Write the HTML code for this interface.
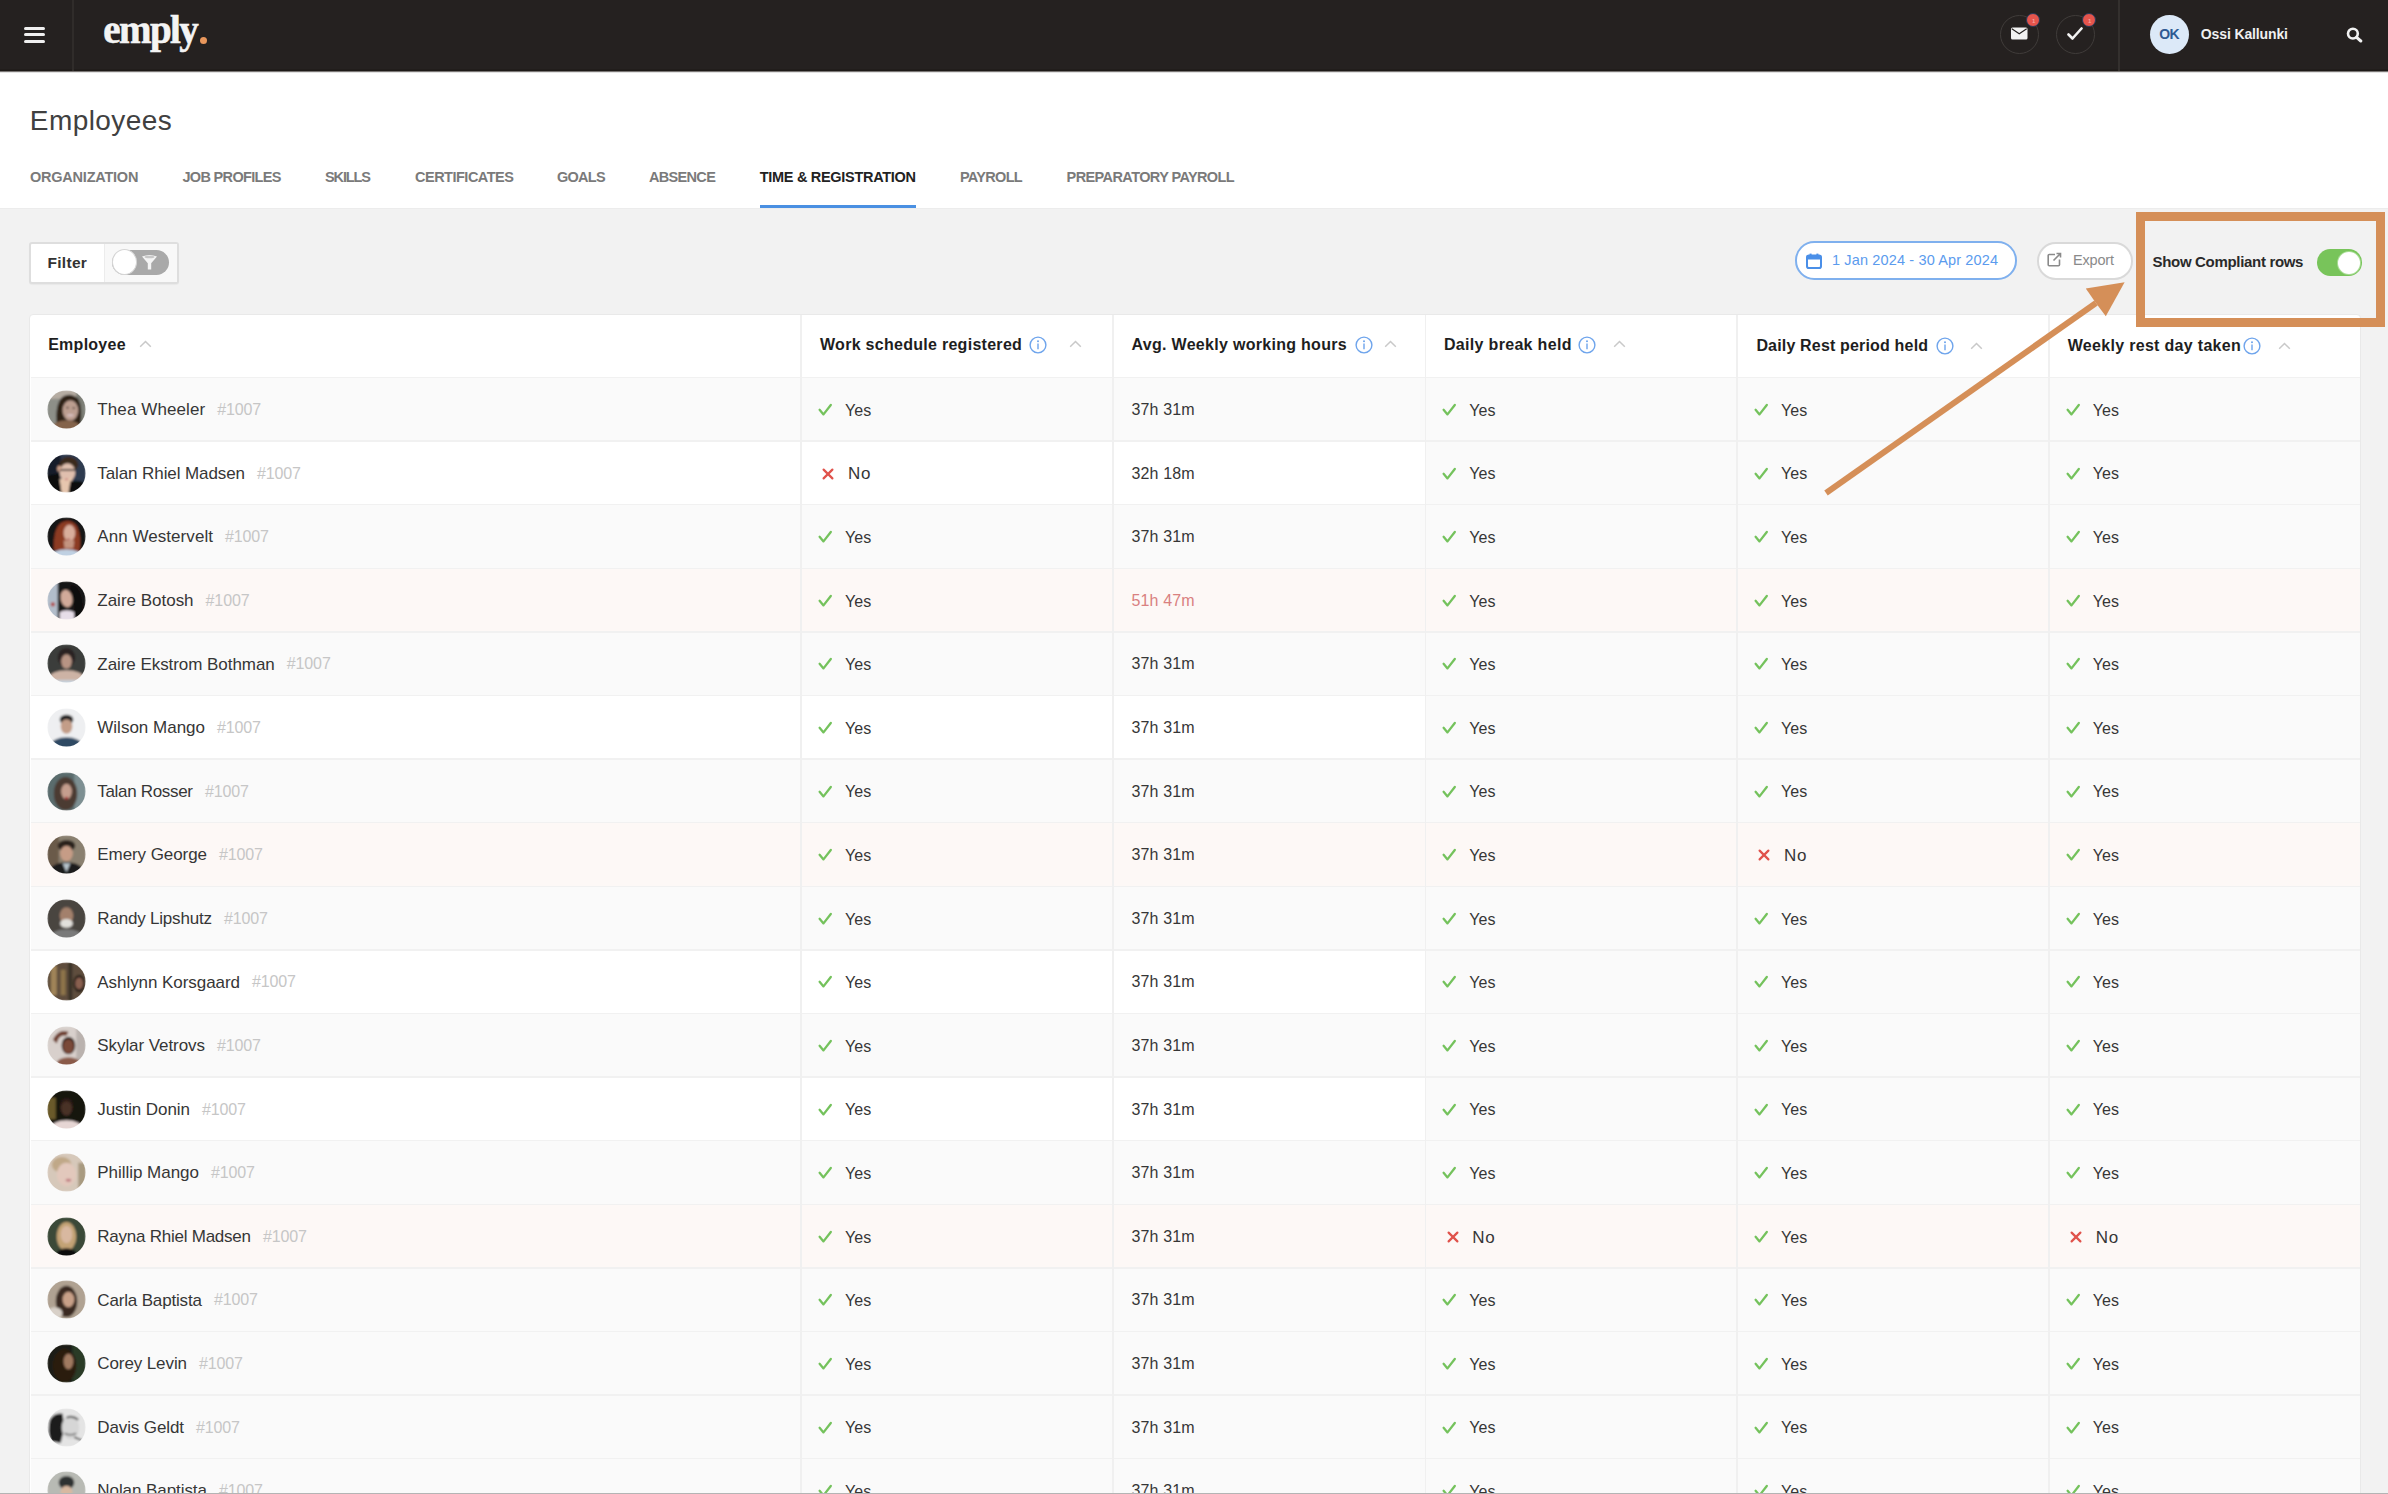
<!DOCTYPE html><html><head><meta charset="utf-8"><style>
*{box-sizing:border-box;margin:0;padding:0}
html,body{width:2388px;height:1494px;overflow:hidden;background:#f2f2f2;font-family:"Liberation Sans", sans-serif;}
.t{position:absolute;white-space:nowrap;line-height:1;}
.a{position:absolute;}
</style></head><body>
<svg width="0" height="0" style="position:absolute"><defs><filter id="bl" x="-10%" y="-10%" width="120%" height="120%"><feGaussianBlur stdDeviation="1.2"/></filter></defs></svg>
<div class="a" style="left:0;top:0;width:2388px;height:71px;background:#252120"></div>
<div class="a" style="left:0;top:69px;width:2388px;height:1px;background:#211d1b"></div><div class="a" style="left:0;top:70px;width:2388px;height:1px;background:#1e1a18"></div>
<div class="a" style="left:24px;top:26.5px;width:21px;height:3px;border-radius:1.5px;background:#f0f0f0"></div>
<div class="a" style="left:24px;top:33px;width:21px;height:3px;border-radius:1.5px;background:#f0f0f0"></div>
<div class="a" style="left:24px;top:39.5px;width:21px;height:3px;border-radius:1.5px;background:#f0f0f0"></div>
<div class="a" style="left:72px;top:0;width:2px;height:71px;background:#302c2a"></div>
<div class="t" style="left:103.30px;top:10.24px;font-size:39px;color:#f4f4f4;font-weight:700;letter-spacing:-1.575px;font-family:'Liberation Serif', serif;-webkit-text-stroke:0.6px #f4f4f4;">emply</div>
<div class="a" style="left:200px;top:37px;width:7px;height:7px;border-radius:50%;background:#e9975c"></div>
<div class="a" style="left:1999.5px;top:14.5px;width:39px;height:39px;border-radius:50%;border:1.5px solid #403c3a"></div>
<div class="a" style="left:2055.5px;top:14.5px;width:39px;height:39px;border-radius:50%;border:1.5px solid #403c3a"></div>
<svg class="a" style="left:2011px;top:27px" width="17" height="13" viewBox="0 0 17 13"><rect x="0" y="0.5" width="16.5" height="12" rx="1.5" fill="#f2f2f2"/><path d="M0.8 1.8 L8.25 6.8 L15.7 1.8" fill="none" stroke="#252120" stroke-width="1.1"/></svg>
<svg class="a" style="left:2067px;top:27px" width="16" height="14" viewBox="0 0 16 14"><path d="M1.5 7.5 L5.5 11.5 L14.5 1.5" fill="none" stroke="#f2f2f2" stroke-width="2.6" stroke-linecap="round" stroke-linejoin="round"/></svg>
<div class="a" style="left:2025.7px;top:13px;width:14px;height:14px;border-radius:50%;background:#e5544c;border:1.5px solid #243a5c"></div>
<div class="t" style="left:2031.90px;top:17.52px;font-size:6px;color:#f3a29c;font-weight:700;letter-spacing:0.000px;">1</div>
<div class="a" style="left:2081.9px;top:13px;width:14px;height:14px;border-radius:50%;background:#e5544c;border:1.5px solid #243a5c"></div>
<div class="t" style="left:2088.10px;top:17.52px;font-size:6px;color:#f3a29c;font-weight:700;letter-spacing:0.000px;">1</div>
<div class="a" style="left:2118px;top:0;width:2px;height:71px;background:#34302e"></div>
<div class="a" style="left:2150px;top:14.5px;width:39px;height:39px;border-radius:50%;background:#dce9f8"></div>
<div class="t" style="left:2159.20px;top:26.95px;font-size:14px;color:#2e5a93;font-weight:700;letter-spacing:-0.700px;">OK</div>
<div class="t" style="left:2200.80px;top:26.95px;font-size:14px;color:#f0f0f0;font-weight:700;letter-spacing:-0.125px;">Ossi Kallunki</div>
<svg class="a" style="left:2346px;top:27px" width="17" height="16" viewBox="0 0 17 16"><circle cx="6.9" cy="6.6" r="4.9" fill="none" stroke="#f2f2f2" stroke-width="2.6"/><path d="M10.6 10.4 L14.8 14" stroke="#f2f2f2" stroke-width="3" stroke-linecap="round"/></svg>
<div class="a" style="left:0;top:71px;width:2388px;height:137.5px;background:#fff"></div><div class="a" style="left:0;top:71px;width:2388px;height:1px;background:#7a7674"></div><div class="a" style="left:0;top:72px;width:2388px;height:1px;background:#e2e2e2"></div>
<div class="a" style="left:0;top:207.5px;width:2388px;height:1.5px;background:#ececec"></div>
<div class="t" style="left:29.80px;top:107.10px;font-size:28px;color:#404040;font-weight:400;letter-spacing:0.438px;">Employees</div>
<div class="t" style="left:30.00px;top:170.03px;font-size:14.5px;color:#7a7a7a;font-weight:700;letter-spacing:-0.227px;">ORGANIZATION</div>
<div class="t" style="left:182.40px;top:170.03px;font-size:14.5px;color:#7a7a7a;font-weight:700;letter-spacing:-0.664px;">JOB PROFILES</div>
<div class="t" style="left:325.00px;top:170.03px;font-size:14.5px;color:#7a7a7a;font-weight:700;letter-spacing:-1.120px;">SKILLS</div>
<div class="t" style="left:415.00px;top:170.03px;font-size:14.5px;color:#7a7a7a;font-weight:700;letter-spacing:-0.500px;">CERTIFICATES</div>
<div class="t" style="left:557.00px;top:170.03px;font-size:14.5px;color:#7a7a7a;font-weight:700;letter-spacing:-0.750px;">GOALS</div>
<div class="t" style="left:649.00px;top:170.03px;font-size:14.5px;color:#7a7a7a;font-weight:700;letter-spacing:-0.683px;">ABSENCE</div>
<div class="t" style="left:759.80px;top:170.03px;font-size:14.5px;color:#222222;font-weight:700;letter-spacing:-0.306px;">TIME &amp; REGISTRATION</div>
<div class="t" style="left:959.90px;top:170.03px;font-size:14.5px;color:#7a7a7a;font-weight:700;letter-spacing:-0.683px;">PAYROLL</div>
<div class="t" style="left:1066.60px;top:170.03px;font-size:14.5px;color:#7a7a7a;font-weight:700;letter-spacing:-0.600px;">PREPARATORY PAYROLL</div>
<div class="a" style="left:760px;top:205px;width:156px;height:3px;background:#4a90e2"></div>
<div class="a" style="left:28.5px;top:241.5px;width:150px;height:42px;border:2px solid #dedede;border-radius:3px;background:#fff;box-shadow:0 1px 1px rgba(0,0,0,0.04)"></div>
<div class="a" style="left:103.5px;top:243.5px;width:73px;height:38px;background:#f8f8f8;border-left:1px solid #ececec"></div>
<div class="t" style="left:47.40px;top:255.28px;font-size:15.5px;color:#333;font-weight:700;letter-spacing:0.320px;">Filter</div>
<div class="a" style="left:112px;top:249.5px;width:57px;height:25px;border-radius:12.5px;background:#a9a9a9"></div>
<div class="a" style="left:111.5px;top:249px;width:25px;height:26px;border-radius:50%;background:#fff;border:1.5px solid #d6d6d6"></div>
<svg class="a" style="left:141px;top:254px" width="17" height="17" viewBox="0 0 17 17"><path d="M1 2.5 Q8.5 -0.5 16 2.5 L10.2 9.2 L10.2 15.5 L6.8 15.5 L6.8 9.2 Z" fill="#f4f4f4"/><ellipse cx="8.5" cy="3" rx="5" ry="1.3" fill="#c8c8c8"/></svg>
<div class="a" style="left:1795px;top:241px;width:222px;height:38.5px;border-radius:19.25px;border:2px solid #7fb0ee;background:#fff"></div>
<svg class="a" style="left:1806px;top:252.5px" width="16" height="16" viewBox="0 0 16 16"><rect x="1" y="2.5" width="14" height="12.5" rx="1.8" fill="none" stroke="#4a8fe8" stroke-width="2"/><rect x="1" y="2.5" width="14" height="4" fill="#4a8fe8"/><rect x="3.6" y="0.6" width="2" height="3" fill="#4a8fe8"/><rect x="10.4" y="0.6" width="2" height="3" fill="#4a8fe8"/></svg>
<div class="t" style="left:1832.00px;top:253.13px;font-size:14.5px;color:#5b9bee;font-weight:400;letter-spacing:0.139px;">1 Jan 2024 - 30 Apr 2024</div>
<div class="a" style="left:2037px;top:242px;width:96px;height:37.5px;border-radius:18.75px;border:2px solid #d9d9d9;background:#fff"></div>
<svg class="a" style="left:2047px;top:252px" width="15" height="15" viewBox="0 0 15 15"><path d="M8 2.5 H2.2 Q1.2 2.5 1.2 3.5 V12.8 Q1.2 13.8 2.2 13.8 H11.5 Q12.5 13.8 12.5 12.8 V7.5" fill="none" stroke="#8a8a8a" stroke-width="1.6"/><path d="M6.5 8.5 L13 2 M9.5 1.5 H13.5 V5.5" fill="none" stroke="#8a8a8a" stroke-width="1.6"/></svg>
<div class="t" style="left:2073.00px;top:253.13px;font-size:14.5px;color:#8a8a8a;font-weight:400;letter-spacing:-0.180px;">Export</div>
<div class="t" style="left:2152.50px;top:253.50px;font-size:15px;color:#2a2a2a;font-weight:700;letter-spacing:-0.317px;">Show Compliant rows</div>
<div class="a" style="left:2317px;top:249px;width:45px;height:26.5px;border-radius:13.25px;background:#78c45a"></div>
<div class="a" style="left:2337.5px;top:251.5px;width:22px;height:22px;border-radius:50%;background:#fff;box-shadow:0 0 0 1px #a8dc95"></div>
<div class="a" style="left:29px;top:313.5px;width:2332px;height:1300px;background:#fff;border:1.5px solid #e9e9e9;border-radius:4px"></div>
<div class="a" style="left:30.5px;top:377.50px;width:2329px;height:63.60px;background:#fafafa"></div>
<div class="a" style="left:30.5px;top:441.10px;width:2329px;height:63.60px;background:#ffffff"></div>
<div class="a" style="left:1425.5px;top:441.10px;width:934.00px;height:63.60px;background:#fafafa"></div>
<div class="a" style="left:30.5px;top:504.70px;width:2329px;height:63.60px;background:#fafafa"></div>
<div class="a" style="left:30.5px;top:568.30px;width:2329px;height:63.60px;background:#fdf8f6"></div>
<div class="a" style="left:30.5px;top:631.90px;width:2329px;height:63.60px;background:#fafafa"></div>
<div class="a" style="left:30.5px;top:695.50px;width:2329px;height:63.60px;background:#ffffff"></div>
<div class="a" style="left:1425.5px;top:695.50px;width:934.00px;height:63.60px;background:#fafafa"></div>
<div class="a" style="left:30.5px;top:759.10px;width:2329px;height:63.60px;background:#fafafa"></div>
<div class="a" style="left:30.5px;top:822.70px;width:2329px;height:63.60px;background:#fdf8f6"></div>
<div class="a" style="left:30.5px;top:886.30px;width:2329px;height:63.60px;background:#fafafa"></div>
<div class="a" style="left:30.5px;top:949.90px;width:2329px;height:63.60px;background:#ffffff"></div>
<div class="a" style="left:1425.5px;top:949.90px;width:934.00px;height:63.60px;background:#fafafa"></div>
<div class="a" style="left:30.5px;top:1013.50px;width:2329px;height:63.60px;background:#fafafa"></div>
<div class="a" style="left:30.5px;top:1077.10px;width:2329px;height:63.60px;background:#ffffff"></div>
<div class="a" style="left:1425.5px;top:1077.10px;width:934.00px;height:63.60px;background:#fafafa"></div>
<div class="a" style="left:30.5px;top:1140.70px;width:2329px;height:63.60px;background:#fafafa"></div>
<div class="a" style="left:30.5px;top:1204.30px;width:2329px;height:63.60px;background:#fdf8f6"></div>
<div class="a" style="left:30.5px;top:1267.90px;width:2329px;height:63.60px;background:#fafafa"></div>
<div class="a" style="left:30.5px;top:1331.50px;width:2329px;height:63.60px;background:#fafafa"></div>
<div class="a" style="left:30.5px;top:1395.10px;width:2329px;height:63.60px;background:#fafafa"></div>
<div class="a" style="left:30.5px;top:1458.70px;width:2329px;height:63.60px;background:#fafafa"></div>
<div class="a" style="left:30.5px;top:376.75px;width:2329px;height:1.5px;background:#f1f1f1"></div>
<div class="a" style="left:30.5px;top:440.35px;width:2329px;height:1.5px;background:#f1f1f1"></div>
<div class="a" style="left:30.5px;top:503.95px;width:2329px;height:1.5px;background:#f1f1f1"></div>
<div class="a" style="left:30.5px;top:567.55px;width:2329px;height:1.5px;background:#f1f1f1"></div>
<div class="a" style="left:30.5px;top:631.15px;width:2329px;height:1.5px;background:#f1f1f1"></div>
<div class="a" style="left:30.5px;top:694.75px;width:2329px;height:1.5px;background:#f1f1f1"></div>
<div class="a" style="left:30.5px;top:758.35px;width:2329px;height:1.5px;background:#f1f1f1"></div>
<div class="a" style="left:30.5px;top:821.95px;width:2329px;height:1.5px;background:#f1f1f1"></div>
<div class="a" style="left:30.5px;top:885.55px;width:2329px;height:1.5px;background:#f1f1f1"></div>
<div class="a" style="left:30.5px;top:949.15px;width:2329px;height:1.5px;background:#f1f1f1"></div>
<div class="a" style="left:30.5px;top:1012.75px;width:2329px;height:1.5px;background:#f1f1f1"></div>
<div class="a" style="left:30.5px;top:1076.35px;width:2329px;height:1.5px;background:#f1f1f1"></div>
<div class="a" style="left:30.5px;top:1139.95px;width:2329px;height:1.5px;background:#f1f1f1"></div>
<div class="a" style="left:30.5px;top:1203.55px;width:2329px;height:1.5px;background:#f1f1f1"></div>
<div class="a" style="left:30.5px;top:1267.15px;width:2329px;height:1.5px;background:#f1f1f1"></div>
<div class="a" style="left:30.5px;top:1330.75px;width:2329px;height:1.5px;background:#f1f1f1"></div>
<div class="a" style="left:30.5px;top:1394.35px;width:2329px;height:1.5px;background:#f1f1f1"></div>
<div class="a" style="left:30.5px;top:1457.95px;width:2329px;height:1.5px;background:#f1f1f1"></div>
<div class="a" style="left:30.5px;top:1521.55px;width:2329px;height:1.5px;background:#f1f1f1"></div>
<div class="a" style="left:800.45px;top:315.0px;width:1.5px;height:1300px;background:#f0f0f0"></div>
<div class="a" style="left:1112.25px;top:315.0px;width:1.5px;height:1300px;background:#f0f0f0"></div>
<div class="a" style="left:1424.75px;top:315.0px;width:1.5px;height:1300px;background:#f0f0f0"></div>
<div class="a" style="left:1736.45px;top:315.0px;width:1.5px;height:1300px;background:#f0f0f0"></div>
<div class="a" style="left:2048.25px;top:315.0px;width:1.5px;height:1300px;background:#f0f0f0"></div>
<div class="t" style="left:48.20px;top:336.66px;font-size:16px;color:#1e1e1e;font-weight:700;letter-spacing:0.257px;">Employee</div>
<svg class="a" style="left:139px;top:340.2px" width="13" height="8" viewBox="0 0 13 8"><path d="M1.2 6.8 L6.5 1.5 L11.8 6.8" fill="none" stroke="#c9c9c9" stroke-width="1.5"/></svg>
<div class="t" style="left:820.00px;top:336.66px;font-size:16px;color:#1e1e1e;font-weight:700;letter-spacing:0.283px;">Work schedule registered</div>
<svg class="a" style="left:1028.8px;top:335.7px" width="18" height="18" viewBox="0 0 18 18"><circle cx="9" cy="9" r="7.9" fill="none" stroke="#6ea4ec" stroke-width="1.4"/><circle cx="9" cy="5.2" r="1" fill="#6ea4ec"/><path d="M9 7.6 V13.2" stroke="#6ea4ec" stroke-width="1.4"/></svg>
<svg class="a" style="left:1068.8px;top:340.2px" width="13" height="8" viewBox="0 0 13 8"><path d="M1.2 6.8 L6.5 1.5 L11.8 6.8" fill="none" stroke="#c9c9c9" stroke-width="1.5"/></svg>
<div class="t" style="left:1131.60px;top:336.66px;font-size:16px;color:#1e1e1e;font-weight:700;letter-spacing:0.292px;">Avg. Weekly working hours</div>
<svg class="a" style="left:1355px;top:335.7px" width="18" height="18" viewBox="0 0 18 18"><circle cx="9" cy="9" r="7.9" fill="none" stroke="#6ea4ec" stroke-width="1.4"/><circle cx="9" cy="5.2" r="1" fill="#6ea4ec"/><path d="M9 7.6 V13.2" stroke="#6ea4ec" stroke-width="1.4"/></svg>
<svg class="a" style="left:1384px;top:340.2px" width="13" height="8" viewBox="0 0 13 8"><path d="M1.2 6.8 L6.5 1.5 L11.8 6.8" fill="none" stroke="#c9c9c9" stroke-width="1.5"/></svg>
<div class="t" style="left:1444.00px;top:336.66px;font-size:16px;color:#1e1e1e;font-weight:700;letter-spacing:0.313px;">Daily break held</div>
<svg class="a" style="left:1578px;top:335.7px" width="18" height="18" viewBox="0 0 18 18"><circle cx="9" cy="9" r="7.9" fill="none" stroke="#6ea4ec" stroke-width="1.4"/><circle cx="9" cy="5.2" r="1" fill="#6ea4ec"/><path d="M9 7.6 V13.2" stroke="#6ea4ec" stroke-width="1.4"/></svg>
<svg class="a" style="left:1613px;top:340.2px" width="13" height="8" viewBox="0 0 13 8"><path d="M1.2 6.8 L6.5 1.5 L11.8 6.8" fill="none" stroke="#c9c9c9" stroke-width="1.5"/></svg>
<div class="t" style="left:1756.40px;top:337.96px;font-size:16px;color:#1e1e1e;font-weight:700;letter-spacing:0.171px;">Daily Rest period held</div>
<svg class="a" style="left:1936px;top:337.0px" width="18" height="18" viewBox="0 0 18 18"><circle cx="9" cy="9" r="7.9" fill="none" stroke="#6ea4ec" stroke-width="1.4"/><circle cx="9" cy="5.2" r="1" fill="#6ea4ec"/><path d="M9 7.6 V13.2" stroke="#6ea4ec" stroke-width="1.4"/></svg>
<svg class="a" style="left:1969.5px;top:341.5px" width="13" height="8" viewBox="0 0 13 8"><path d="M1.2 6.8 L6.5 1.5 L11.8 6.8" fill="none" stroke="#c9c9c9" stroke-width="1.5"/></svg>
<div class="t" style="left:2067.70px;top:337.96px;font-size:16px;color:#1e1e1e;font-weight:700;letter-spacing:0.310px;">Weekly rest day taken</div>
<svg class="a" style="left:2243px;top:337.0px" width="18" height="18" viewBox="0 0 18 18"><circle cx="9" cy="9" r="7.9" fill="none" stroke="#6ea4ec" stroke-width="1.4"/><circle cx="9" cy="5.2" r="1" fill="#6ea4ec"/><path d="M9 7.6 V13.2" stroke="#6ea4ec" stroke-width="1.4"/></svg>
<svg class="a" style="left:2277.7px;top:341.5px" width="13" height="8" viewBox="0 0 13 8"><path d="M1.2 6.8 L6.5 1.5 L11.8 6.8" fill="none" stroke="#c9c9c9" stroke-width="1.5"/></svg>
<svg class="a" style="left:47px;top:390.00px" width="39" height="39" viewBox="0 0 40 40"><defs><clipPath id="c0"><circle cx="20" cy="20" r="19.6"/></clipPath></defs><g clip-path="url(#c0)"><g filter="url(#bl)"><rect width="40" height="40" fill="#8d8f88"/><rect x="0" y="0" width="40" height="9" fill="#b5aca2"/><rect x="30" y="0" width="10" height="40" fill="#7e8078"/><path d="M10 36 Q8 14 16 7 Q24 2 32 9 Q37 18 34 38 Z" fill="#2e2219"/><ellipse cx="24" cy="21" rx="8" ry="10.5" fill="#bc9e90"/><ellipse cx="20" cy="38" rx="14" ry="7" fill="#84644c"/><ellipse cx="21" cy="18" rx="1.4" ry="0.9" fill="#4a3a34"/><ellipse cx="27.5" cy="18.5" rx="1.4" ry="0.9" fill="#4a3a34"/><ellipse cx="24" cy="26" rx="3.5" ry="1.3" fill="#d8c0c0"/></g></g></svg>
<div class="t" style="left:97.30px;top:401.21px;font-size:17px;color:#363636;font-weight:400;letter-spacing:0.100px;">Thea Wheeler</div>
<div class="t" style="left:217.20px;top:402.06px;font-size:16px;color:#c6c6c6;font-weight:400;letter-spacing:-0.125px;">#1007</div>
<svg class="a" style="left:817.0px;top:402.0px" width="16" height="15" viewBox="0 0 16 15"><path d="M2.6 7.8 L6.5 12.4 L13.8 3" fill="none" stroke="#74c25c" stroke-width="2.3" stroke-linecap="round" stroke-linejoin="round"/></svg><div class="t" style="left:845.00px;top:402.76px;font-size:16px;color:#363636;font-weight:400;letter-spacing:0.050px;">Yes</div>
<div class="t" style="left:1131.60px;top:402.06px;font-size:16px;color:#363636;font-weight:400;letter-spacing:0.117px;">37h 31m</div>
<svg class="a" style="left:1441.3px;top:402.0px" width="16" height="15" viewBox="0 0 16 15"><path d="M2.6 7.8 L6.5 12.4 L13.8 3" fill="none" stroke="#74c25c" stroke-width="2.3" stroke-linecap="round" stroke-linejoin="round"/></svg><div class="t" style="left:1469.30px;top:402.76px;font-size:16px;color:#363636;font-weight:400;letter-spacing:0.050px;">Yes</div>
<svg class="a" style="left:1753.0px;top:402.0px" width="16" height="15" viewBox="0 0 16 15"><path d="M2.6 7.8 L6.5 12.4 L13.8 3" fill="none" stroke="#74c25c" stroke-width="2.3" stroke-linecap="round" stroke-linejoin="round"/></svg><div class="t" style="left:1781.00px;top:402.76px;font-size:16px;color:#363636;font-weight:400;letter-spacing:0.050px;">Yes</div>
<svg class="a" style="left:2064.8px;top:402.0px" width="16" height="15" viewBox="0 0 16 15"><path d="M2.6 7.8 L6.5 12.4 L13.8 3" fill="none" stroke="#74c25c" stroke-width="2.3" stroke-linecap="round" stroke-linejoin="round"/></svg><div class="t" style="left:2092.80px;top:402.76px;font-size:16px;color:#363636;font-weight:400;letter-spacing:0.050px;">Yes</div>
<svg class="a" style="left:47px;top:453.60px" width="39" height="39" viewBox="0 0 40 40"><defs><clipPath id="c1"><circle cx="20" cy="20" r="19.6"/></clipPath></defs><g clip-path="url(#c1)"><g filter="url(#bl)"><rect width="40" height="40" fill="#2f3a4f"/><rect x="0" y="0" width="14" height="40" fill="#141c2a"/><path d="M12 12 Q14 2 24 3 Q32 4 32 12 L30 16 L14 16 Z" fill="#3a2a1e"/><ellipse cx="21" cy="19" rx="8" ry="9.5" fill="#e0bfae"/><ellipse cx="12.5" cy="15" rx="2" ry="3" fill="#d8a890"/><rect x="13" y="15.5" width="16" height="1.6" fill="#3a3030"/><path d="M12 26 L26 24 L24 40 L14 40 Z" fill="#e6c6ae"/><path d="M24 28 Q34 26 40 30 L40 40 L22 40 Z" fill="#080808"/><path d="M0 22 L12 20 L15 40 L0 40 Z" fill="#0a0a0a"/><ellipse cx="20" cy="26" rx="2" ry="1" fill="#c88080"/></g></g></svg>
<div class="t" style="left:97.30px;top:464.81px;font-size:17px;color:#363636;font-weight:400;letter-spacing:-0.094px;">Talan Rhiel Madsen</div>
<div class="t" style="left:257.00px;top:465.66px;font-size:16px;color:#c6c6c6;font-weight:400;letter-spacing:-0.125px;">#1007</div>
<svg class="a" style="left:821.3000000000001px;top:466.70000000000005px" width="14" height="14" viewBox="0 0 14 14"><path d="M2.6 2.6 L11.4 11.4 M11.4 2.6 L2.6 11.4" stroke="#e0524b" stroke-width="2.2" stroke-linecap="round"/></svg><div class="t" style="left:848.00px;top:465.31px;font-size:17px;color:#363636;font-weight:400;letter-spacing:0.600px;">No</div>
<div class="t" style="left:1131.60px;top:465.66px;font-size:16px;color:#363636;font-weight:400;letter-spacing:0.117px;">32h 18m</div>
<svg class="a" style="left:1441.3px;top:465.6px" width="16" height="15" viewBox="0 0 16 15"><path d="M2.6 7.8 L6.5 12.4 L13.8 3" fill="none" stroke="#74c25c" stroke-width="2.3" stroke-linecap="round" stroke-linejoin="round"/></svg><div class="t" style="left:1469.30px;top:466.36px;font-size:16px;color:#363636;font-weight:400;letter-spacing:0.050px;">Yes</div>
<svg class="a" style="left:1753.0px;top:465.6px" width="16" height="15" viewBox="0 0 16 15"><path d="M2.6 7.8 L6.5 12.4 L13.8 3" fill="none" stroke="#74c25c" stroke-width="2.3" stroke-linecap="round" stroke-linejoin="round"/></svg><div class="t" style="left:1781.00px;top:466.36px;font-size:16px;color:#363636;font-weight:400;letter-spacing:0.050px;">Yes</div>
<svg class="a" style="left:2064.8px;top:465.6px" width="16" height="15" viewBox="0 0 16 15"><path d="M2.6 7.8 L6.5 12.4 L13.8 3" fill="none" stroke="#74c25c" stroke-width="2.3" stroke-linecap="round" stroke-linejoin="round"/></svg><div class="t" style="left:2092.80px;top:466.36px;font-size:16px;color:#363636;font-weight:400;letter-spacing:0.050px;">Yes</div>
<svg class="a" style="left:47px;top:517.20px" width="39" height="39" viewBox="0 0 40 40"><defs><clipPath id="c2"><circle cx="20" cy="20" r="19.6"/></clipPath></defs><g clip-path="url(#c2)"><g filter="url(#bl)"><rect width="40" height="40" fill="#121212"/><path d="M7 34 Q6 10 16 5 Q26 2 31 10 Q36 22 33 36 Z" fill="#8c3a22"/><ellipse cx="23" cy="16.5" rx="6" ry="8.5" fill="#d9ae9c"/><ellipse cx="22" cy="23" rx="1.8" ry="1" fill="#b06060"/><path d="M17 24 L28 24 L27 32 L18 32 Z" fill="#c49480"/><ellipse cx="20" cy="40" rx="16" ry="7" fill="#bfd0e2"/></g></g></svg>
<div class="t" style="left:97.30px;top:528.41px;font-size:17px;color:#363636;font-weight:400;letter-spacing:0.054px;">Ann Westervelt</div>
<div class="t" style="left:225.00px;top:529.26px;font-size:16px;color:#c6c6c6;font-weight:400;letter-spacing:-0.125px;">#1007</div>
<svg class="a" style="left:817.0px;top:529.1999999999999px" width="16" height="15" viewBox="0 0 16 15"><path d="M2.6 7.8 L6.5 12.4 L13.8 3" fill="none" stroke="#74c25c" stroke-width="2.3" stroke-linecap="round" stroke-linejoin="round"/></svg><div class="t" style="left:845.00px;top:529.96px;font-size:16px;color:#363636;font-weight:400;letter-spacing:0.050px;">Yes</div>
<div class="t" style="left:1131.60px;top:529.26px;font-size:16px;color:#363636;font-weight:400;letter-spacing:0.117px;">37h 31m</div>
<svg class="a" style="left:1441.3px;top:529.1999999999999px" width="16" height="15" viewBox="0 0 16 15"><path d="M2.6 7.8 L6.5 12.4 L13.8 3" fill="none" stroke="#74c25c" stroke-width="2.3" stroke-linecap="round" stroke-linejoin="round"/></svg><div class="t" style="left:1469.30px;top:529.96px;font-size:16px;color:#363636;font-weight:400;letter-spacing:0.050px;">Yes</div>
<svg class="a" style="left:1753.0px;top:529.1999999999999px" width="16" height="15" viewBox="0 0 16 15"><path d="M2.6 7.8 L6.5 12.4 L13.8 3" fill="none" stroke="#74c25c" stroke-width="2.3" stroke-linecap="round" stroke-linejoin="round"/></svg><div class="t" style="left:1781.00px;top:529.96px;font-size:16px;color:#363636;font-weight:400;letter-spacing:0.050px;">Yes</div>
<svg class="a" style="left:2064.8px;top:529.1999999999999px" width="16" height="15" viewBox="0 0 16 15"><path d="M2.6 7.8 L6.5 12.4 L13.8 3" fill="none" stroke="#74c25c" stroke-width="2.3" stroke-linecap="round" stroke-linejoin="round"/></svg><div class="t" style="left:2092.80px;top:529.96px;font-size:16px;color:#363636;font-weight:400;letter-spacing:0.050px;">Yes</div>
<svg class="a" style="left:47px;top:580.80px" width="39" height="39" viewBox="0 0 40 40"><defs><clipPath id="c3"><circle cx="20" cy="20" r="19.6"/></clipPath></defs><g clip-path="url(#c3)"><g filter="url(#bl)"><rect width="40" height="40" fill="#161212"/><rect x="0" y="0" width="11" height="40" fill="#b2bdca"/><circle cx="6" cy="24" r="2.2" fill="#b04848"/><ellipse cx="20" cy="18" rx="6" ry="9" fill="#d2aa9a" transform="rotate(-12 20 18)"/><path d="M13 32 Q20 28 28 32 L28 40 L13 40 Z" fill="#e6dde8"/><path d="M26 4 Q38 10 36 36 L28 36 Q30 18 24 6 Z" fill="#0e0a0a"/></g></g></svg>
<div class="t" style="left:97.30px;top:592.01px;font-size:17px;color:#363636;font-weight:400;letter-spacing:-0.009px;">Zaire Botosh</div>
<div class="t" style="left:205.60px;top:592.86px;font-size:16px;color:#c6c6c6;font-weight:400;letter-spacing:-0.125px;">#1007</div>
<svg class="a" style="left:817.0px;top:592.8px" width="16" height="15" viewBox="0 0 16 15"><path d="M2.6 7.8 L6.5 12.4 L13.8 3" fill="none" stroke="#74c25c" stroke-width="2.3" stroke-linecap="round" stroke-linejoin="round"/></svg><div class="t" style="left:845.00px;top:593.56px;font-size:16px;color:#363636;font-weight:400;letter-spacing:0.050px;">Yes</div>
<div class="t" style="left:1131.60px;top:592.86px;font-size:16px;color:#d98080;font-weight:400;letter-spacing:0.117px;">51h 47m</div>
<svg class="a" style="left:1441.3px;top:592.8px" width="16" height="15" viewBox="0 0 16 15"><path d="M2.6 7.8 L6.5 12.4 L13.8 3" fill="none" stroke="#74c25c" stroke-width="2.3" stroke-linecap="round" stroke-linejoin="round"/></svg><div class="t" style="left:1469.30px;top:593.56px;font-size:16px;color:#363636;font-weight:400;letter-spacing:0.050px;">Yes</div>
<svg class="a" style="left:1753.0px;top:592.8px" width="16" height="15" viewBox="0 0 16 15"><path d="M2.6 7.8 L6.5 12.4 L13.8 3" fill="none" stroke="#74c25c" stroke-width="2.3" stroke-linecap="round" stroke-linejoin="round"/></svg><div class="t" style="left:1781.00px;top:593.56px;font-size:16px;color:#363636;font-weight:400;letter-spacing:0.050px;">Yes</div>
<svg class="a" style="left:2064.8px;top:592.8px" width="16" height="15" viewBox="0 0 16 15"><path d="M2.6 7.8 L6.5 12.4 L13.8 3" fill="none" stroke="#74c25c" stroke-width="2.3" stroke-linecap="round" stroke-linejoin="round"/></svg><div class="t" style="left:2092.80px;top:593.56px;font-size:16px;color:#363636;font-weight:400;letter-spacing:0.050px;">Yes</div>
<svg class="a" style="left:47px;top:644.40px" width="39" height="39" viewBox="0 0 40 40"><defs><clipPath id="c4"><circle cx="20" cy="20" r="19.6"/></clipPath></defs><g clip-path="url(#c4)"><g filter="url(#bl)"><rect width="40" height="40" fill="#3b3d3b"/><ellipse cx="20" cy="14" rx="9" ry="10" fill="#2a2220"/><ellipse cx="20" cy="18" rx="5.5" ry="7.5" fill="#b79484"/><ellipse cx="20" cy="34" rx="17" ry="7" fill="#cdb3a5"/><rect x="0" y="37" width="40" height="4" fill="#c8d2dc"/></g></g></svg>
<div class="t" style="left:97.30px;top:655.61px;font-size:17px;color:#363636;font-weight:400;letter-spacing:-0.055px;">Zaire Ekstrom Bothman</div>
<div class="t" style="left:286.80px;top:656.46px;font-size:16px;color:#c6c6c6;font-weight:400;letter-spacing:-0.125px;">#1007</div>
<svg class="a" style="left:817.0px;top:656.4px" width="16" height="15" viewBox="0 0 16 15"><path d="M2.6 7.8 L6.5 12.4 L13.8 3" fill="none" stroke="#74c25c" stroke-width="2.3" stroke-linecap="round" stroke-linejoin="round"/></svg><div class="t" style="left:845.00px;top:657.16px;font-size:16px;color:#363636;font-weight:400;letter-spacing:0.050px;">Yes</div>
<div class="t" style="left:1131.60px;top:656.46px;font-size:16px;color:#363636;font-weight:400;letter-spacing:0.117px;">37h 31m</div>
<svg class="a" style="left:1441.3px;top:656.4px" width="16" height="15" viewBox="0 0 16 15"><path d="M2.6 7.8 L6.5 12.4 L13.8 3" fill="none" stroke="#74c25c" stroke-width="2.3" stroke-linecap="round" stroke-linejoin="round"/></svg><div class="t" style="left:1469.30px;top:657.16px;font-size:16px;color:#363636;font-weight:400;letter-spacing:0.050px;">Yes</div>
<svg class="a" style="left:1753.0px;top:656.4px" width="16" height="15" viewBox="0 0 16 15"><path d="M2.6 7.8 L6.5 12.4 L13.8 3" fill="none" stroke="#74c25c" stroke-width="2.3" stroke-linecap="round" stroke-linejoin="round"/></svg><div class="t" style="left:1781.00px;top:657.16px;font-size:16px;color:#363636;font-weight:400;letter-spacing:0.050px;">Yes</div>
<svg class="a" style="left:2064.8px;top:656.4px" width="16" height="15" viewBox="0 0 16 15"><path d="M2.6 7.8 L6.5 12.4 L13.8 3" fill="none" stroke="#74c25c" stroke-width="2.3" stroke-linecap="round" stroke-linejoin="round"/></svg><div class="t" style="left:2092.80px;top:657.16px;font-size:16px;color:#363636;font-weight:400;letter-spacing:0.050px;">Yes</div>
<svg class="a" style="left:47px;top:708.00px" width="39" height="39" viewBox="0 0 40 40"><defs><clipPath id="c5"><circle cx="20" cy="20" r="19.6"/></clipPath></defs><g clip-path="url(#c5)"><g filter="url(#bl)"><rect width="40" height="40" fill="#eeeff1"/><ellipse cx="20" cy="12" rx="7" ry="5" fill="#222"/><ellipse cx="20" cy="19" rx="6" ry="7.5" fill="#c39d88"/><ellipse cx="20" cy="38" rx="16" ry="8" fill="#2f4a63"/></g></g></svg>
<div class="t" style="left:97.30px;top:719.21px;font-size:17px;color:#363636;font-weight:400;letter-spacing:0.000px;">Wilson Mango</div>
<div class="t" style="left:217.00px;top:720.06px;font-size:16px;color:#c6c6c6;font-weight:400;letter-spacing:-0.125px;">#1007</div>
<svg class="a" style="left:817.0px;top:720.0px" width="16" height="15" viewBox="0 0 16 15"><path d="M2.6 7.8 L6.5 12.4 L13.8 3" fill="none" stroke="#74c25c" stroke-width="2.3" stroke-linecap="round" stroke-linejoin="round"/></svg><div class="t" style="left:845.00px;top:720.76px;font-size:16px;color:#363636;font-weight:400;letter-spacing:0.050px;">Yes</div>
<div class="t" style="left:1131.60px;top:720.06px;font-size:16px;color:#363636;font-weight:400;letter-spacing:0.117px;">37h 31m</div>
<svg class="a" style="left:1441.3px;top:720.0px" width="16" height="15" viewBox="0 0 16 15"><path d="M2.6 7.8 L6.5 12.4 L13.8 3" fill="none" stroke="#74c25c" stroke-width="2.3" stroke-linecap="round" stroke-linejoin="round"/></svg><div class="t" style="left:1469.30px;top:720.76px;font-size:16px;color:#363636;font-weight:400;letter-spacing:0.050px;">Yes</div>
<svg class="a" style="left:1753.0px;top:720.0px" width="16" height="15" viewBox="0 0 16 15"><path d="M2.6 7.8 L6.5 12.4 L13.8 3" fill="none" stroke="#74c25c" stroke-width="2.3" stroke-linecap="round" stroke-linejoin="round"/></svg><div class="t" style="left:1781.00px;top:720.76px;font-size:16px;color:#363636;font-weight:400;letter-spacing:0.050px;">Yes</div>
<svg class="a" style="left:2064.8px;top:720.0px" width="16" height="15" viewBox="0 0 16 15"><path d="M2.6 7.8 L6.5 12.4 L13.8 3" fill="none" stroke="#74c25c" stroke-width="2.3" stroke-linecap="round" stroke-linejoin="round"/></svg><div class="t" style="left:2092.80px;top:720.76px;font-size:16px;color:#363636;font-weight:400;letter-spacing:0.050px;">Yes</div>
<svg class="a" style="left:47px;top:771.60px" width="39" height="39" viewBox="0 0 40 40"><defs><clipPath id="c6"><circle cx="20" cy="20" r="19.6"/></clipPath></defs><g clip-path="url(#c6)"><g filter="url(#bl)"><rect width="40" height="40" fill="#5a6c6d"/><rect x="28" y="0" width="12" height="40" fill="#7d8f92"/><ellipse cx="19" cy="22" rx="12" ry="17" fill="#4b3a30"/><ellipse cx="20" cy="20" rx="5.5" ry="8" fill="#c59e8e"/><circle cx="20" cy="27" r="1.5" fill="#a02828"/></g></g></svg>
<div class="t" style="left:97.30px;top:782.81px;font-size:17px;color:#363636;font-weight:400;letter-spacing:-0.318px;">Talan Rosser</div>
<div class="t" style="left:205.00px;top:783.66px;font-size:16px;color:#c6c6c6;font-weight:400;letter-spacing:-0.125px;">#1007</div>
<svg class="a" style="left:817.0px;top:783.6px" width="16" height="15" viewBox="0 0 16 15"><path d="M2.6 7.8 L6.5 12.4 L13.8 3" fill="none" stroke="#74c25c" stroke-width="2.3" stroke-linecap="round" stroke-linejoin="round"/></svg><div class="t" style="left:845.00px;top:784.36px;font-size:16px;color:#363636;font-weight:400;letter-spacing:0.050px;">Yes</div>
<div class="t" style="left:1131.60px;top:783.66px;font-size:16px;color:#363636;font-weight:400;letter-spacing:0.117px;">37h 31m</div>
<svg class="a" style="left:1441.3px;top:783.6px" width="16" height="15" viewBox="0 0 16 15"><path d="M2.6 7.8 L6.5 12.4 L13.8 3" fill="none" stroke="#74c25c" stroke-width="2.3" stroke-linecap="round" stroke-linejoin="round"/></svg><div class="t" style="left:1469.30px;top:784.36px;font-size:16px;color:#363636;font-weight:400;letter-spacing:0.050px;">Yes</div>
<svg class="a" style="left:1753.0px;top:783.6px" width="16" height="15" viewBox="0 0 16 15"><path d="M2.6 7.8 L6.5 12.4 L13.8 3" fill="none" stroke="#74c25c" stroke-width="2.3" stroke-linecap="round" stroke-linejoin="round"/></svg><div class="t" style="left:1781.00px;top:784.36px;font-size:16px;color:#363636;font-weight:400;letter-spacing:0.050px;">Yes</div>
<svg class="a" style="left:2064.8px;top:783.6px" width="16" height="15" viewBox="0 0 16 15"><path d="M2.6 7.8 L6.5 12.4 L13.8 3" fill="none" stroke="#74c25c" stroke-width="2.3" stroke-linecap="round" stroke-linejoin="round"/></svg><div class="t" style="left:2092.80px;top:784.36px;font-size:16px;color:#363636;font-weight:400;letter-spacing:0.050px;">Yes</div>
<svg class="a" style="left:47px;top:835.20px" width="39" height="39" viewBox="0 0 40 40"><defs><clipPath id="c7"><circle cx="20" cy="20" r="19.6"/></clipPath></defs><g clip-path="url(#c7)"><g filter="url(#bl)"><rect width="40" height="40" fill="#8a8070"/><rect x="0" y="0" width="12" height="40" fill="#6a5a48"/><ellipse cx="20" cy="11" rx="9" ry="6" fill="#2a201a"/><ellipse cx="20" cy="19" rx="6.5" ry="8" fill="#c69c86"/><ellipse cx="20" cy="38" rx="18" ry="10" fill="#1e1e1e"/><path d="M16 29 L20 38 L24 29 Z" fill="#b8c4cc"/></g></g></svg>
<div class="t" style="left:97.30px;top:846.41px;font-size:17px;color:#363636;font-weight:400;letter-spacing:-0.073px;">Emery George</div>
<div class="t" style="left:219.00px;top:847.26px;font-size:16px;color:#c6c6c6;font-weight:400;letter-spacing:-0.125px;">#1007</div>
<svg class="a" style="left:817.0px;top:847.2px" width="16" height="15" viewBox="0 0 16 15"><path d="M2.6 7.8 L6.5 12.4 L13.8 3" fill="none" stroke="#74c25c" stroke-width="2.3" stroke-linecap="round" stroke-linejoin="round"/></svg><div class="t" style="left:845.00px;top:847.96px;font-size:16px;color:#363636;font-weight:400;letter-spacing:0.050px;">Yes</div>
<div class="t" style="left:1131.60px;top:847.26px;font-size:16px;color:#363636;font-weight:400;letter-spacing:0.117px;">37h 31m</div>
<svg class="a" style="left:1441.3px;top:847.2px" width="16" height="15" viewBox="0 0 16 15"><path d="M2.6 7.8 L6.5 12.4 L13.8 3" fill="none" stroke="#74c25c" stroke-width="2.3" stroke-linecap="round" stroke-linejoin="round"/></svg><div class="t" style="left:1469.30px;top:847.96px;font-size:16px;color:#363636;font-weight:400;letter-spacing:0.050px;">Yes</div>
<svg class="a" style="left:1757.3px;top:848.3000000000001px" width="14" height="14" viewBox="0 0 14 14"><path d="M2.6 2.6 L11.4 11.4 M11.4 2.6 L2.6 11.4" stroke="#e0524b" stroke-width="2.2" stroke-linecap="round"/></svg><div class="t" style="left:1784.00px;top:846.91px;font-size:17px;color:#363636;font-weight:400;letter-spacing:0.600px;">No</div>
<svg class="a" style="left:2064.8px;top:847.2px" width="16" height="15" viewBox="0 0 16 15"><path d="M2.6 7.8 L6.5 12.4 L13.8 3" fill="none" stroke="#74c25c" stroke-width="2.3" stroke-linecap="round" stroke-linejoin="round"/></svg><div class="t" style="left:2092.80px;top:847.96px;font-size:16px;color:#363636;font-weight:400;letter-spacing:0.050px;">Yes</div>
<svg class="a" style="left:47px;top:898.80px" width="39" height="39" viewBox="0 0 40 40"><defs><clipPath id="c8"><circle cx="20" cy="20" r="19.6"/></clipPath></defs><g clip-path="url(#c8)"><g filter="url(#bl)"><rect width="40" height="40" fill="#4a4540"/><ellipse cx="20" cy="17" rx="7" ry="8.5" fill="#a3806c"/><ellipse cx="20" cy="25" rx="6.5" ry="4.5" fill="#e2e0dc"/><ellipse cx="20" cy="39" rx="17" ry="8" fill="#7a7a7a"/></g></g></svg>
<div class="t" style="left:97.30px;top:910.01px;font-size:17px;color:#363636;font-weight:400;letter-spacing:-0.192px;">Randy Lipshutz</div>
<div class="t" style="left:224.00px;top:910.86px;font-size:16px;color:#c6c6c6;font-weight:400;letter-spacing:-0.125px;">#1007</div>
<svg class="a" style="left:817.0px;top:910.8px" width="16" height="15" viewBox="0 0 16 15"><path d="M2.6 7.8 L6.5 12.4 L13.8 3" fill="none" stroke="#74c25c" stroke-width="2.3" stroke-linecap="round" stroke-linejoin="round"/></svg><div class="t" style="left:845.00px;top:911.56px;font-size:16px;color:#363636;font-weight:400;letter-spacing:0.050px;">Yes</div>
<div class="t" style="left:1131.60px;top:910.86px;font-size:16px;color:#363636;font-weight:400;letter-spacing:0.117px;">37h 31m</div>
<svg class="a" style="left:1441.3px;top:910.8px" width="16" height="15" viewBox="0 0 16 15"><path d="M2.6 7.8 L6.5 12.4 L13.8 3" fill="none" stroke="#74c25c" stroke-width="2.3" stroke-linecap="round" stroke-linejoin="round"/></svg><div class="t" style="left:1469.30px;top:911.56px;font-size:16px;color:#363636;font-weight:400;letter-spacing:0.050px;">Yes</div>
<svg class="a" style="left:1753.0px;top:910.8px" width="16" height="15" viewBox="0 0 16 15"><path d="M2.6 7.8 L6.5 12.4 L13.8 3" fill="none" stroke="#74c25c" stroke-width="2.3" stroke-linecap="round" stroke-linejoin="round"/></svg><div class="t" style="left:1781.00px;top:911.56px;font-size:16px;color:#363636;font-weight:400;letter-spacing:0.050px;">Yes</div>
<svg class="a" style="left:2064.8px;top:910.8px" width="16" height="15" viewBox="0 0 16 15"><path d="M2.6 7.8 L6.5 12.4 L13.8 3" fill="none" stroke="#74c25c" stroke-width="2.3" stroke-linecap="round" stroke-linejoin="round"/></svg><div class="t" style="left:2092.80px;top:911.56px;font-size:16px;color:#363636;font-weight:400;letter-spacing:0.050px;">Yes</div>
<svg class="a" style="left:47px;top:962.40px" width="39" height="39" viewBox="0 0 40 40"><defs><clipPath id="c9"><circle cx="20" cy="20" r="19.6"/></clipPath></defs><g clip-path="url(#c9)"><g filter="url(#bl)"><rect width="40" height="40" fill="#5e4e3c"/><rect x="4" y="4" width="6" height="30" fill="#a08458"/><rect x="14" y="8" width="5" height="26" fill="#8e7448"/><rect x="22" y="0" width="4" height="40" fill="#3a3028"/><ellipse cx="33" cy="22" rx="6" ry="9" fill="#2a201c"/><ellipse cx="33" cy="22" rx="4" ry="6" fill="#8a6050"/></g></g></svg>
<div class="t" style="left:97.30px;top:973.61px;font-size:17px;color:#363636;font-weight:400;letter-spacing:-0.056px;">Ashlynn Korsgaard</div>
<div class="t" style="left:252.00px;top:974.46px;font-size:16px;color:#c6c6c6;font-weight:400;letter-spacing:-0.125px;">#1007</div>
<svg class="a" style="left:817.0px;top:974.4px" width="16" height="15" viewBox="0 0 16 15"><path d="M2.6 7.8 L6.5 12.4 L13.8 3" fill="none" stroke="#74c25c" stroke-width="2.3" stroke-linecap="round" stroke-linejoin="round"/></svg><div class="t" style="left:845.00px;top:975.16px;font-size:16px;color:#363636;font-weight:400;letter-spacing:0.050px;">Yes</div>
<div class="t" style="left:1131.60px;top:974.46px;font-size:16px;color:#363636;font-weight:400;letter-spacing:0.117px;">37h 31m</div>
<svg class="a" style="left:1441.3px;top:974.4px" width="16" height="15" viewBox="0 0 16 15"><path d="M2.6 7.8 L6.5 12.4 L13.8 3" fill="none" stroke="#74c25c" stroke-width="2.3" stroke-linecap="round" stroke-linejoin="round"/></svg><div class="t" style="left:1469.30px;top:975.16px;font-size:16px;color:#363636;font-weight:400;letter-spacing:0.050px;">Yes</div>
<svg class="a" style="left:1753.0px;top:974.4px" width="16" height="15" viewBox="0 0 16 15"><path d="M2.6 7.8 L6.5 12.4 L13.8 3" fill="none" stroke="#74c25c" stroke-width="2.3" stroke-linecap="round" stroke-linejoin="round"/></svg><div class="t" style="left:1781.00px;top:975.16px;font-size:16px;color:#363636;font-weight:400;letter-spacing:0.050px;">Yes</div>
<svg class="a" style="left:2064.8px;top:974.4px" width="16" height="15" viewBox="0 0 16 15"><path d="M2.6 7.8 L6.5 12.4 L13.8 3" fill="none" stroke="#74c25c" stroke-width="2.3" stroke-linecap="round" stroke-linejoin="round"/></svg><div class="t" style="left:2092.80px;top:975.16px;font-size:16px;color:#363636;font-weight:400;letter-spacing:0.050px;">Yes</div>
<svg class="a" style="left:47px;top:1026.00px" width="39" height="39" viewBox="0 0 40 40"><defs><clipPath id="c10"><circle cx="20" cy="20" r="19.6"/></clipPath></defs><g clip-path="url(#c10)"><g filter="url(#bl)"><rect width="40" height="40" fill="#d8d0cc"/><rect x="30" y="0" width="10" height="40" fill="#bab2ae"/><path d="M6 14 Q12 2 22 6 L20 10 Q12 8 10 18 Z" fill="#6e3e2e"/><ellipse cx="22" cy="20" rx="7" ry="9" fill="#2c1c18"/><ellipse cx="22" cy="21" rx="5.5" ry="7.5" fill="#7a4838"/><ellipse cx="22" cy="38" rx="12" ry="6" fill="#8a5a48"/></g></g></svg>
<div class="t" style="left:97.30px;top:1037.21px;font-size:17px;color:#363636;font-weight:400;letter-spacing:-0.077px;">Skylar Vetrovs</div>
<div class="t" style="left:217.00px;top:1038.06px;font-size:16px;color:#c6c6c6;font-weight:400;letter-spacing:-0.125px;">#1007</div>
<svg class="a" style="left:817.0px;top:1038.0px" width="16" height="15" viewBox="0 0 16 15"><path d="M2.6 7.8 L6.5 12.4 L13.8 3" fill="none" stroke="#74c25c" stroke-width="2.3" stroke-linecap="round" stroke-linejoin="round"/></svg><div class="t" style="left:845.00px;top:1038.76px;font-size:16px;color:#363636;font-weight:400;letter-spacing:0.050px;">Yes</div>
<div class="t" style="left:1131.60px;top:1038.06px;font-size:16px;color:#363636;font-weight:400;letter-spacing:0.117px;">37h 31m</div>
<svg class="a" style="left:1441.3px;top:1038.0px" width="16" height="15" viewBox="0 0 16 15"><path d="M2.6 7.8 L6.5 12.4 L13.8 3" fill="none" stroke="#74c25c" stroke-width="2.3" stroke-linecap="round" stroke-linejoin="round"/></svg><div class="t" style="left:1469.30px;top:1038.76px;font-size:16px;color:#363636;font-weight:400;letter-spacing:0.050px;">Yes</div>
<svg class="a" style="left:1753.0px;top:1038.0px" width="16" height="15" viewBox="0 0 16 15"><path d="M2.6 7.8 L6.5 12.4 L13.8 3" fill="none" stroke="#74c25c" stroke-width="2.3" stroke-linecap="round" stroke-linejoin="round"/></svg><div class="t" style="left:1781.00px;top:1038.76px;font-size:16px;color:#363636;font-weight:400;letter-spacing:0.050px;">Yes</div>
<svg class="a" style="left:2064.8px;top:1038.0px" width="16" height="15" viewBox="0 0 16 15"><path d="M2.6 7.8 L6.5 12.4 L13.8 3" fill="none" stroke="#74c25c" stroke-width="2.3" stroke-linecap="round" stroke-linejoin="round"/></svg><div class="t" style="left:2092.80px;top:1038.76px;font-size:16px;color:#363636;font-weight:400;letter-spacing:0.050px;">Yes</div>
<svg class="a" style="left:47px;top:1089.60px" width="39" height="39" viewBox="0 0 40 40"><defs><clipPath id="c11"><circle cx="20" cy="20" r="19.6"/></clipPath></defs><g clip-path="url(#c11)"><g filter="url(#bl)"><rect width="40" height="40" fill="#141410"/><rect x="0" y="8" width="9" height="22" fill="#6a5a2a"/><ellipse cx="20" cy="17" rx="7" ry="9" fill="#2a1a14"/><ellipse cx="20" cy="19" rx="5.5" ry="7.5" fill="#4a3026"/><ellipse cx="20" cy="39" rx="16" ry="8" fill="#e6d6d4"/></g></g></svg>
<div class="t" style="left:97.30px;top:1100.81px;font-size:17px;color:#363636;font-weight:400;letter-spacing:-0.082px;">Justin Donin</div>
<div class="t" style="left:202.00px;top:1101.66px;font-size:16px;color:#c6c6c6;font-weight:400;letter-spacing:-0.125px;">#1007</div>
<svg class="a" style="left:817.0px;top:1101.6px" width="16" height="15" viewBox="0 0 16 15"><path d="M2.6 7.8 L6.5 12.4 L13.8 3" fill="none" stroke="#74c25c" stroke-width="2.3" stroke-linecap="round" stroke-linejoin="round"/></svg><div class="t" style="left:845.00px;top:1102.36px;font-size:16px;color:#363636;font-weight:400;letter-spacing:0.050px;">Yes</div>
<div class="t" style="left:1131.60px;top:1101.66px;font-size:16px;color:#363636;font-weight:400;letter-spacing:0.117px;">37h 31m</div>
<svg class="a" style="left:1441.3px;top:1101.6px" width="16" height="15" viewBox="0 0 16 15"><path d="M2.6 7.8 L6.5 12.4 L13.8 3" fill="none" stroke="#74c25c" stroke-width="2.3" stroke-linecap="round" stroke-linejoin="round"/></svg><div class="t" style="left:1469.30px;top:1102.36px;font-size:16px;color:#363636;font-weight:400;letter-spacing:0.050px;">Yes</div>
<svg class="a" style="left:1753.0px;top:1101.6px" width="16" height="15" viewBox="0 0 16 15"><path d="M2.6 7.8 L6.5 12.4 L13.8 3" fill="none" stroke="#74c25c" stroke-width="2.3" stroke-linecap="round" stroke-linejoin="round"/></svg><div class="t" style="left:1781.00px;top:1102.36px;font-size:16px;color:#363636;font-weight:400;letter-spacing:0.050px;">Yes</div>
<svg class="a" style="left:2064.8px;top:1101.6px" width="16" height="15" viewBox="0 0 16 15"><path d="M2.6 7.8 L6.5 12.4 L13.8 3" fill="none" stroke="#74c25c" stroke-width="2.3" stroke-linecap="round" stroke-linejoin="round"/></svg><div class="t" style="left:2092.80px;top:1102.36px;font-size:16px;color:#363636;font-weight:400;letter-spacing:0.050px;">Yes</div>
<svg class="a" style="left:47px;top:1153.20px" width="39" height="39" viewBox="0 0 40 40"><defs><clipPath id="c12"><circle cx="20" cy="20" r="19.6"/></clipPath></defs><g clip-path="url(#c12)"><g filter="url(#bl)"><rect width="40" height="40" fill="#d6c8ba"/><ellipse cx="15" cy="12" rx="10" ry="8" fill="#c0a888"/><ellipse cx="20" cy="22" rx="10" ry="12" fill="#e2c8bc"/><ellipse cx="22" cy="28" rx="3" ry="1.5" fill="#c07a80"/><rect x="32" y="10" width="8" height="30" fill="#a89a80"/></g></g></svg>
<div class="t" style="left:97.30px;top:1164.41px;font-size:17px;color:#363636;font-weight:400;letter-spacing:-0.033px;">Phillip Mango</div>
<div class="t" style="left:211.00px;top:1165.26px;font-size:16px;color:#c6c6c6;font-weight:400;letter-spacing:-0.125px;">#1007</div>
<svg class="a" style="left:817.0px;top:1165.2px" width="16" height="15" viewBox="0 0 16 15"><path d="M2.6 7.8 L6.5 12.4 L13.8 3" fill="none" stroke="#74c25c" stroke-width="2.3" stroke-linecap="round" stroke-linejoin="round"/></svg><div class="t" style="left:845.00px;top:1165.96px;font-size:16px;color:#363636;font-weight:400;letter-spacing:0.050px;">Yes</div>
<div class="t" style="left:1131.60px;top:1165.26px;font-size:16px;color:#363636;font-weight:400;letter-spacing:0.117px;">37h 31m</div>
<svg class="a" style="left:1441.3px;top:1165.2px" width="16" height="15" viewBox="0 0 16 15"><path d="M2.6 7.8 L6.5 12.4 L13.8 3" fill="none" stroke="#74c25c" stroke-width="2.3" stroke-linecap="round" stroke-linejoin="round"/></svg><div class="t" style="left:1469.30px;top:1165.96px;font-size:16px;color:#363636;font-weight:400;letter-spacing:0.050px;">Yes</div>
<svg class="a" style="left:1753.0px;top:1165.2px" width="16" height="15" viewBox="0 0 16 15"><path d="M2.6 7.8 L6.5 12.4 L13.8 3" fill="none" stroke="#74c25c" stroke-width="2.3" stroke-linecap="round" stroke-linejoin="round"/></svg><div class="t" style="left:1781.00px;top:1165.96px;font-size:16px;color:#363636;font-weight:400;letter-spacing:0.050px;">Yes</div>
<svg class="a" style="left:2064.8px;top:1165.2px" width="16" height="15" viewBox="0 0 16 15"><path d="M2.6 7.8 L6.5 12.4 L13.8 3" fill="none" stroke="#74c25c" stroke-width="2.3" stroke-linecap="round" stroke-linejoin="round"/></svg><div class="t" style="left:2092.80px;top:1165.96px;font-size:16px;color:#363636;font-weight:400;letter-spacing:0.050px;">Yes</div>
<svg class="a" style="left:47px;top:1216.80px" width="39" height="39" viewBox="0 0 40 40"><defs><clipPath id="c13"><circle cx="20" cy="20" r="19.6"/></clipPath></defs><g clip-path="url(#c13)"><g filter="url(#bl)"><rect width="40" height="40" fill="#3a4838"/><ellipse cx="20" cy="20" rx="10" ry="15" fill="#c2a274"/><ellipse cx="20" cy="18" rx="6" ry="9" fill="#d8b8a0"/><ellipse cx="20" cy="39" rx="11" ry="7" fill="#111"/></g></g></svg>
<div class="t" style="left:97.30px;top:1228.01px;font-size:17px;color:#363636;font-weight:400;letter-spacing:-0.241px;">Rayna Rhiel Madsen</div>
<div class="t" style="left:263.00px;top:1228.86px;font-size:16px;color:#c6c6c6;font-weight:400;letter-spacing:-0.125px;">#1007</div>
<svg class="a" style="left:817.0px;top:1228.8000000000002px" width="16" height="15" viewBox="0 0 16 15"><path d="M2.6 7.8 L6.5 12.4 L13.8 3" fill="none" stroke="#74c25c" stroke-width="2.3" stroke-linecap="round" stroke-linejoin="round"/></svg><div class="t" style="left:845.00px;top:1229.56px;font-size:16px;color:#363636;font-weight:400;letter-spacing:0.050px;">Yes</div>
<div class="t" style="left:1131.60px;top:1228.86px;font-size:16px;color:#363636;font-weight:400;letter-spacing:0.117px;">37h 31m</div>
<svg class="a" style="left:1445.6px;top:1229.9px" width="14" height="14" viewBox="0 0 14 14"><path d="M2.6 2.6 L11.4 11.4 M11.4 2.6 L2.6 11.4" stroke="#e0524b" stroke-width="2.2" stroke-linecap="round"/></svg><div class="t" style="left:1472.30px;top:1228.51px;font-size:17px;color:#363636;font-weight:400;letter-spacing:0.600px;">No</div>
<svg class="a" style="left:1753.0px;top:1228.8000000000002px" width="16" height="15" viewBox="0 0 16 15"><path d="M2.6 7.8 L6.5 12.4 L13.8 3" fill="none" stroke="#74c25c" stroke-width="2.3" stroke-linecap="round" stroke-linejoin="round"/></svg><div class="t" style="left:1781.00px;top:1229.56px;font-size:16px;color:#363636;font-weight:400;letter-spacing:0.050px;">Yes</div>
<svg class="a" style="left:2069.1px;top:1229.9px" width="14" height="14" viewBox="0 0 14 14"><path d="M2.6 2.6 L11.4 11.4 M11.4 2.6 L2.6 11.4" stroke="#e0524b" stroke-width="2.2" stroke-linecap="round"/></svg><div class="t" style="left:2095.80px;top:1228.51px;font-size:17px;color:#363636;font-weight:400;letter-spacing:0.600px;">No</div>
<svg class="a" style="left:47px;top:1280.40px" width="39" height="39" viewBox="0 0 40 40"><defs><clipPath id="c14"><circle cx="20" cy="20" r="19.6"/></clipPath></defs><g clip-path="url(#c14)"><g filter="url(#bl)"><rect width="40" height="40" fill="#b0a292"/><ellipse cx="20" cy="22" rx="11" ry="16" fill="#3a2a20"/><ellipse cx="22" cy="20" rx="6" ry="8" fill="#c8a088"/><ellipse cx="8" cy="34" rx="8" ry="6" fill="#d8d0c8"/></g></g></svg>
<div class="t" style="left:97.30px;top:1291.61px;font-size:17px;color:#363636;font-weight:400;letter-spacing:-0.162px;">Carla Baptista</div>
<div class="t" style="left:214.00px;top:1292.46px;font-size:16px;color:#c6c6c6;font-weight:400;letter-spacing:-0.125px;">#1007</div>
<svg class="a" style="left:817.0px;top:1292.4px" width="16" height="15" viewBox="0 0 16 15"><path d="M2.6 7.8 L6.5 12.4 L13.8 3" fill="none" stroke="#74c25c" stroke-width="2.3" stroke-linecap="round" stroke-linejoin="round"/></svg><div class="t" style="left:845.00px;top:1293.16px;font-size:16px;color:#363636;font-weight:400;letter-spacing:0.050px;">Yes</div>
<div class="t" style="left:1131.60px;top:1292.46px;font-size:16px;color:#363636;font-weight:400;letter-spacing:0.117px;">37h 31m</div>
<svg class="a" style="left:1441.3px;top:1292.4px" width="16" height="15" viewBox="0 0 16 15"><path d="M2.6 7.8 L6.5 12.4 L13.8 3" fill="none" stroke="#74c25c" stroke-width="2.3" stroke-linecap="round" stroke-linejoin="round"/></svg><div class="t" style="left:1469.30px;top:1293.16px;font-size:16px;color:#363636;font-weight:400;letter-spacing:0.050px;">Yes</div>
<svg class="a" style="left:1753.0px;top:1292.4px" width="16" height="15" viewBox="0 0 16 15"><path d="M2.6 7.8 L6.5 12.4 L13.8 3" fill="none" stroke="#74c25c" stroke-width="2.3" stroke-linecap="round" stroke-linejoin="round"/></svg><div class="t" style="left:1781.00px;top:1293.16px;font-size:16px;color:#363636;font-weight:400;letter-spacing:0.050px;">Yes</div>
<svg class="a" style="left:2064.8px;top:1292.4px" width="16" height="15" viewBox="0 0 16 15"><path d="M2.6 7.8 L6.5 12.4 L13.8 3" fill="none" stroke="#74c25c" stroke-width="2.3" stroke-linecap="round" stroke-linejoin="round"/></svg><div class="t" style="left:2092.80px;top:1293.16px;font-size:16px;color:#363636;font-weight:400;letter-spacing:0.050px;">Yes</div>
<svg class="a" style="left:47px;top:1344.00px" width="39" height="39" viewBox="0 0 40 40"><defs><clipPath id="c15"><circle cx="20" cy="20" r="19.6"/></clipPath></defs><g clip-path="url(#c15)"><g filter="url(#bl)"><rect width="40" height="40" fill="#1a1e18"/><rect x="26" y="0" width="14" height="40" fill="#2a3a28"/><ellipse cx="18" cy="22" rx="12" ry="17" fill="#2a1a10"/><ellipse cx="22" cy="18" rx="5" ry="8" fill="#a07a60"/></g></g></svg>
<div class="t" style="left:97.30px;top:1355.21px;font-size:17px;color:#363636;font-weight:400;letter-spacing:-0.100px;">Corey Levin</div>
<div class="t" style="left:199.00px;top:1356.06px;font-size:16px;color:#c6c6c6;font-weight:400;letter-spacing:-0.125px;">#1007</div>
<svg class="a" style="left:817.0px;top:1356.0px" width="16" height="15" viewBox="0 0 16 15"><path d="M2.6 7.8 L6.5 12.4 L13.8 3" fill="none" stroke="#74c25c" stroke-width="2.3" stroke-linecap="round" stroke-linejoin="round"/></svg><div class="t" style="left:845.00px;top:1356.76px;font-size:16px;color:#363636;font-weight:400;letter-spacing:0.050px;">Yes</div>
<div class="t" style="left:1131.60px;top:1356.06px;font-size:16px;color:#363636;font-weight:400;letter-spacing:0.117px;">37h 31m</div>
<svg class="a" style="left:1441.3px;top:1356.0px" width="16" height="15" viewBox="0 0 16 15"><path d="M2.6 7.8 L6.5 12.4 L13.8 3" fill="none" stroke="#74c25c" stroke-width="2.3" stroke-linecap="round" stroke-linejoin="round"/></svg><div class="t" style="left:1469.30px;top:1356.76px;font-size:16px;color:#363636;font-weight:400;letter-spacing:0.050px;">Yes</div>
<svg class="a" style="left:1753.0px;top:1356.0px" width="16" height="15" viewBox="0 0 16 15"><path d="M2.6 7.8 L6.5 12.4 L13.8 3" fill="none" stroke="#74c25c" stroke-width="2.3" stroke-linecap="round" stroke-linejoin="round"/></svg><div class="t" style="left:1781.00px;top:1356.76px;font-size:16px;color:#363636;font-weight:400;letter-spacing:0.050px;">Yes</div>
<svg class="a" style="left:2064.8px;top:1356.0px" width="16" height="15" viewBox="0 0 16 15"><path d="M2.6 7.8 L6.5 12.4 L13.8 3" fill="none" stroke="#74c25c" stroke-width="2.3" stroke-linecap="round" stroke-linejoin="round"/></svg><div class="t" style="left:2092.80px;top:1356.76px;font-size:16px;color:#363636;font-weight:400;letter-spacing:0.050px;">Yes</div>
<svg class="a" style="left:47px;top:1407.60px" width="39" height="39" viewBox="0 0 40 40"><defs><clipPath id="c16"><circle cx="20" cy="20" r="19.6"/></clipPath></defs><g clip-path="url(#c16)"><g filter="url(#bl)"><rect width="40" height="40" fill="#e4e4e4"/><path d="M3 12 Q8 4 16 6 L18 20 L14 36 L4 34 Q0 24 3 12 Z" fill="#1e1e1e"/><ellipse cx="24" cy="20" rx="9" ry="12" fill="#d6d6d6"/><path d="M20 10 Q26 7 32 12" stroke="#555" stroke-width="2" fill="none"/><path d="M18 26 Q24 29 30 26" stroke="#666" stroke-width="1.5" fill="none"/><path d="M28 30 L38 34" stroke="#333" stroke-width="1.5"/></g></g></svg>
<div class="t" style="left:97.30px;top:1418.81px;font-size:17px;color:#363636;font-weight:400;letter-spacing:-0.120px;">Davis Geldt</div>
<div class="t" style="left:196.00px;top:1419.66px;font-size:16px;color:#c6c6c6;font-weight:400;letter-spacing:-0.125px;">#1007</div>
<svg class="a" style="left:817.0px;top:1419.6px" width="16" height="15" viewBox="0 0 16 15"><path d="M2.6 7.8 L6.5 12.4 L13.8 3" fill="none" stroke="#74c25c" stroke-width="2.3" stroke-linecap="round" stroke-linejoin="round"/></svg><div class="t" style="left:845.00px;top:1420.36px;font-size:16px;color:#363636;font-weight:400;letter-spacing:0.050px;">Yes</div>
<div class="t" style="left:1131.60px;top:1419.66px;font-size:16px;color:#363636;font-weight:400;letter-spacing:0.117px;">37h 31m</div>
<svg class="a" style="left:1441.3px;top:1419.6px" width="16" height="15" viewBox="0 0 16 15"><path d="M2.6 7.8 L6.5 12.4 L13.8 3" fill="none" stroke="#74c25c" stroke-width="2.3" stroke-linecap="round" stroke-linejoin="round"/></svg><div class="t" style="left:1469.30px;top:1420.36px;font-size:16px;color:#363636;font-weight:400;letter-spacing:0.050px;">Yes</div>
<svg class="a" style="left:1753.0px;top:1419.6px" width="16" height="15" viewBox="0 0 16 15"><path d="M2.6 7.8 L6.5 12.4 L13.8 3" fill="none" stroke="#74c25c" stroke-width="2.3" stroke-linecap="round" stroke-linejoin="round"/></svg><div class="t" style="left:1781.00px;top:1420.36px;font-size:16px;color:#363636;font-weight:400;letter-spacing:0.050px;">Yes</div>
<svg class="a" style="left:2064.8px;top:1419.6px" width="16" height="15" viewBox="0 0 16 15"><path d="M2.6 7.8 L6.5 12.4 L13.8 3" fill="none" stroke="#74c25c" stroke-width="2.3" stroke-linecap="round" stroke-linejoin="round"/></svg><div class="t" style="left:2092.80px;top:1420.36px;font-size:16px;color:#363636;font-weight:400;letter-spacing:0.050px;">Yes</div>
<svg class="a" style="left:47px;top:1471.20px" width="39" height="39" viewBox="0 0 40 40"><defs><clipPath id="c17"><circle cx="20" cy="20" r="19.6"/></clipPath></defs><g clip-path="url(#c17)"><g filter="url(#bl)"><rect width="40" height="40" fill="#b8bab4"/><ellipse cx="20" cy="12" rx="8" ry="7" fill="#2e3032"/><ellipse cx="20" cy="22" rx="6" ry="7" fill="#d8b8a0"/><rect x="14" y="27" width="12" height="13" fill="#c8a888"/></g></g></svg>
<div class="t" style="left:97.30px;top:1482.41px;font-size:17px;color:#363636;font-weight:400;letter-spacing:-0.069px;">Nolan Baptista</div>
<div class="t" style="left:219.00px;top:1483.26px;font-size:16px;color:#c6c6c6;font-weight:400;letter-spacing:-0.125px;">#1007</div>
<svg class="a" style="left:817.0px;top:1483.2px" width="16" height="15" viewBox="0 0 16 15"><path d="M2.6 7.8 L6.5 12.4 L13.8 3" fill="none" stroke="#74c25c" stroke-width="2.3" stroke-linecap="round" stroke-linejoin="round"/></svg><div class="t" style="left:845.00px;top:1483.96px;font-size:16px;color:#363636;font-weight:400;letter-spacing:0.050px;">Yes</div>
<div class="t" style="left:1131.60px;top:1483.26px;font-size:16px;color:#363636;font-weight:400;letter-spacing:0.117px;">37h 31m</div>
<svg class="a" style="left:1441.3px;top:1483.2px" width="16" height="15" viewBox="0 0 16 15"><path d="M2.6 7.8 L6.5 12.4 L13.8 3" fill="none" stroke="#74c25c" stroke-width="2.3" stroke-linecap="round" stroke-linejoin="round"/></svg><div class="t" style="left:1469.30px;top:1483.96px;font-size:16px;color:#363636;font-weight:400;letter-spacing:0.050px;">Yes</div>
<svg class="a" style="left:1753.0px;top:1483.2px" width="16" height="15" viewBox="0 0 16 15"><path d="M2.6 7.8 L6.5 12.4 L13.8 3" fill="none" stroke="#74c25c" stroke-width="2.3" stroke-linecap="round" stroke-linejoin="round"/></svg><div class="t" style="left:1781.00px;top:1483.96px;font-size:16px;color:#363636;font-weight:400;letter-spacing:0.050px;">Yes</div>
<svg class="a" style="left:2064.8px;top:1483.2px" width="16" height="15" viewBox="0 0 16 15"><path d="M2.6 7.8 L6.5 12.4 L13.8 3" fill="none" stroke="#74c25c" stroke-width="2.3" stroke-linecap="round" stroke-linejoin="round"/></svg><div class="t" style="left:2092.80px;top:1483.96px;font-size:16px;color:#363636;font-weight:400;letter-spacing:0.050px;">Yes</div>
<div class="a" style="left:2136px;top:212px;width:249px;height:115px;border:9px solid #d58f58"></div>
<svg class="a" style="left:0;top:0" width="2388" height="1494" viewBox="0 0 2388 1494"><path d="M1826 493 L2096 303" stroke="#d58f58" stroke-width="6"/><path d="M2124.6 282.2 L2085.8 288.4 L2095.5 302.5 L2105.8 316.2 Z" fill="#d58f58"/></svg>
<div class="a" style="left:0;top:1493px;width:2388px;height:1px;background:#b4b4b4"></div>
</body></html>
